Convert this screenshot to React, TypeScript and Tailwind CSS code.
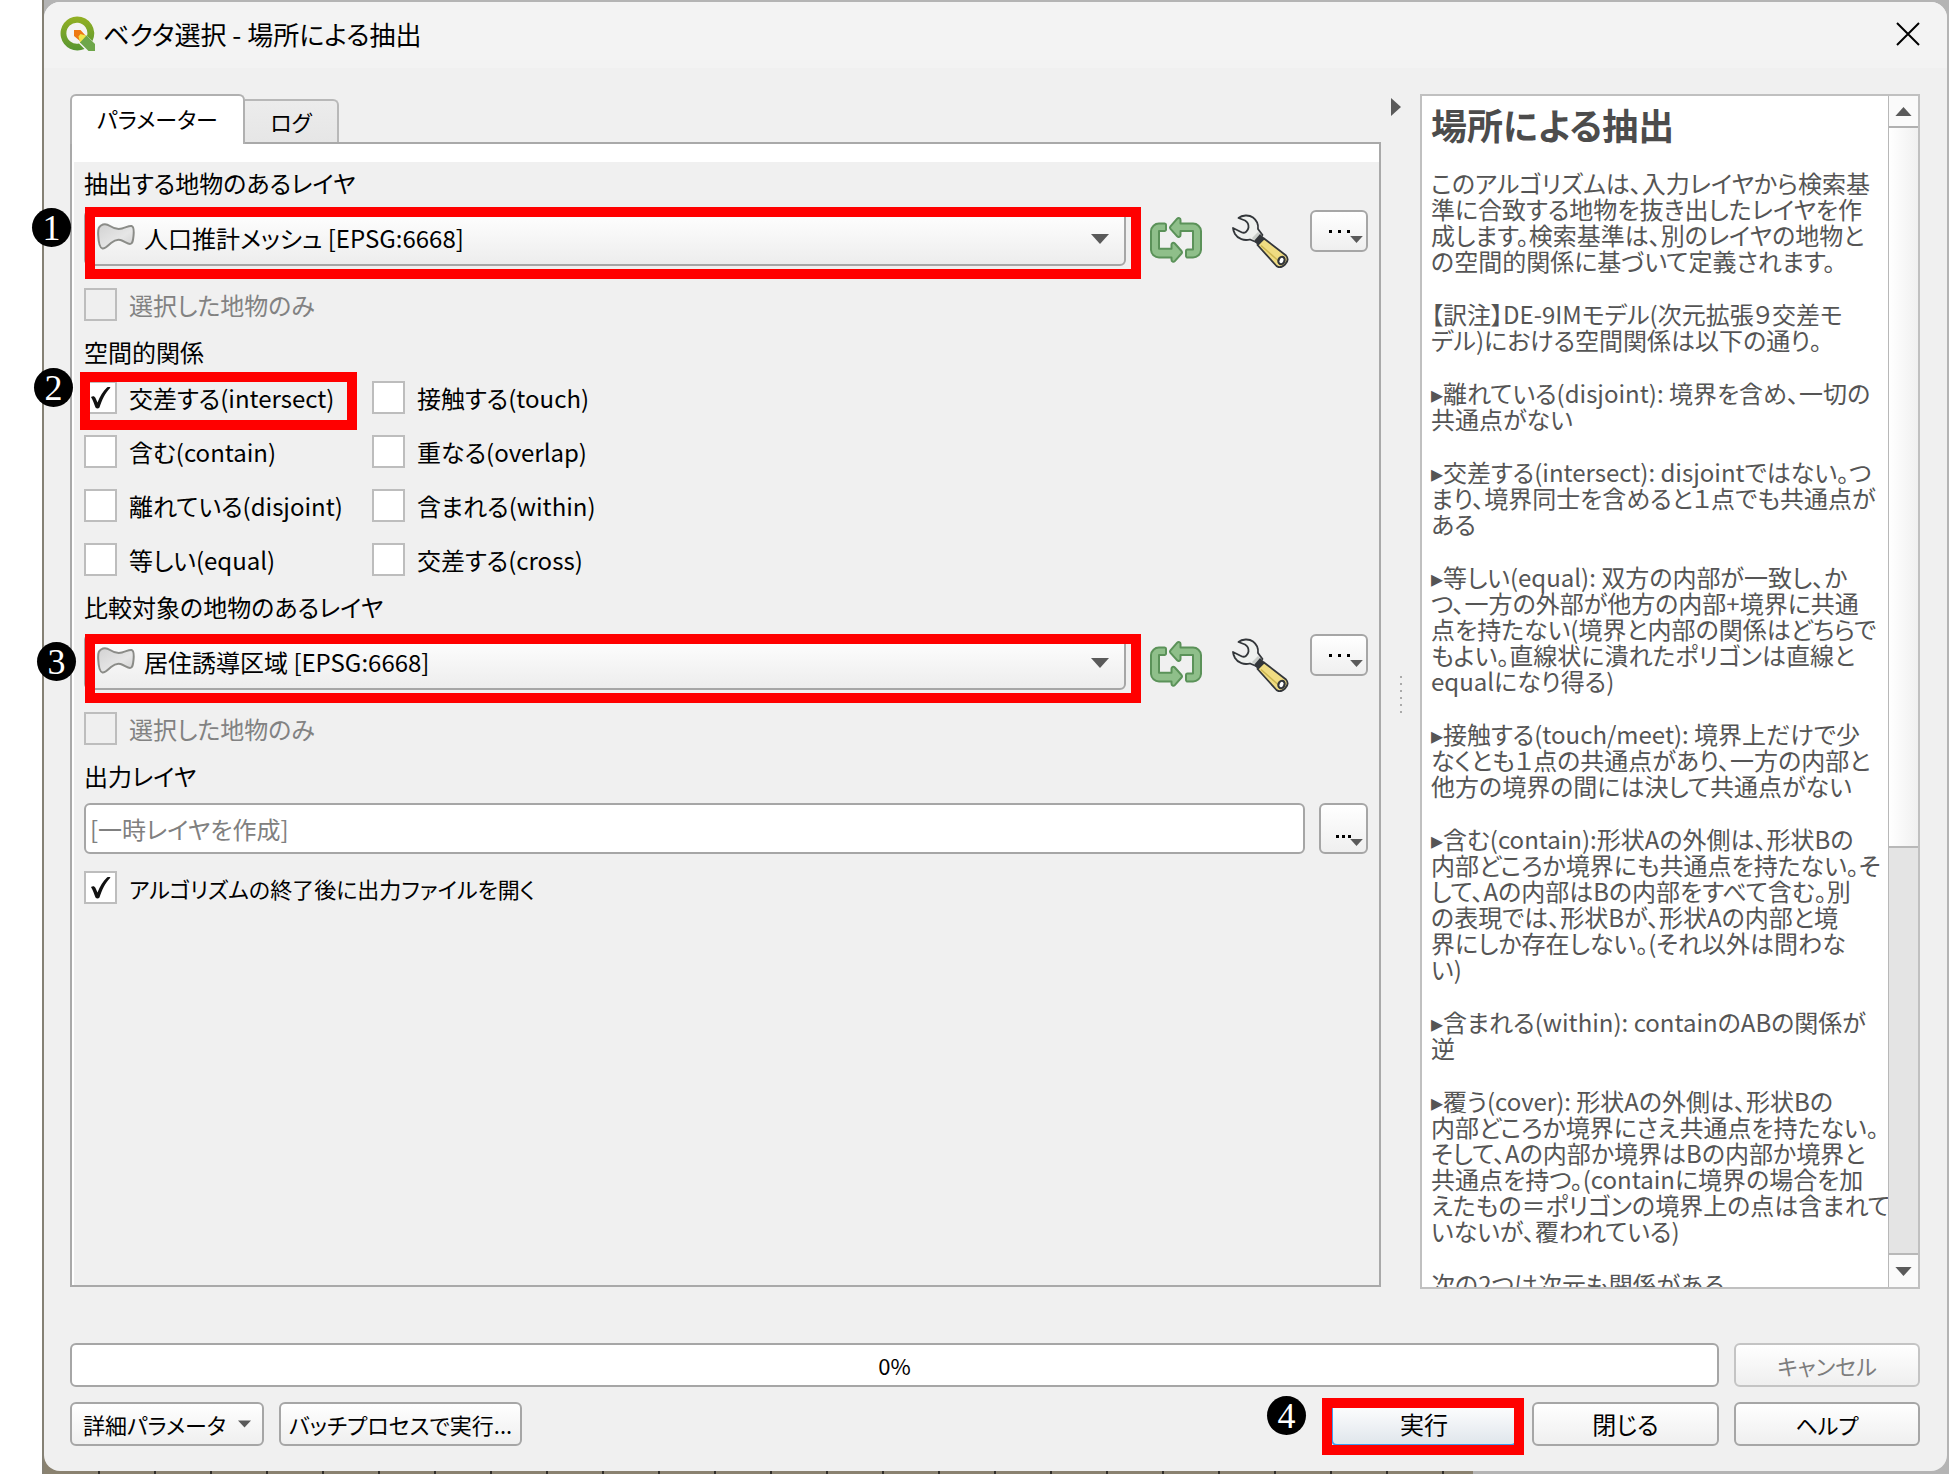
import { useState } from 'react';
import type { ReactNode } from 'react';
import clsx from 'clsx';

const RELATIONS = [
  '交差する(intersect)',
  '接触する(touch)',
  '含む(contain)',
  '重なる(overlap)',
  '離れている(disjoint)',
  '含まれる(within)',
  '等しい(equal)',
  '交差する(cross)',
];

const HELP_PARAGRAPHS = [
  [
    'このアルゴリズムは、入力レイヤから検索基',
    '準に合致する地物を抜き出したレイヤを作',
    '成します。検索基準は、別のレイヤの地物と',
    'の空間的関係に基づいて定義されます。',
  ],
  ['【訳注】DE-9IMモデル(次元拡張９交差モ', 'デル)における空間関係は以下の通り。'],
  ['▸離れている(disjoint): 境界を含め、一切の', '共通点がない'],
  ['▸交差する(intersect): disjointではない。つ', 'まり、境界同士を含めると１点でも共通点が', 'ある'],
  [
    '▸等しい(equal): 双方の内部が一致し、か',
    'つ、一方の外部が他方の内部+境界に共通',
    '点を持たない(境界と内部の関係はどちらで',
    'もよい。直線状に潰れたポリゴンは直線と',
    'equalになり得る)',
  ],
  [
    '▸接触する(touch/meet): 境界上だけで少',
    'なくとも１点の共通点があり、一方の内部と',
    '他方の境界の間には決して共通点がない',
  ],
  [
    '▸含む(contain):形状Aの外側は、形状Bの',
    '内部どころか境界にも共通点を持たない。そ',
    'して、Aの内部はBの内部をすべて含む。別',
    'の表現では、形状Bが、形状Aの内部と境',
    '界にしか存在しない。(それ以外は問わな',
    'い)',
  ],
  ['▸含まれる(within): containのABの関係が', '逆'],
  [
    '▸覆う(cover): 形状Aの外側は、形状Bの',
    '内部どころか境界にさえ共通点を持たない。',
    'そして、Aの内部か境界はBの内部か境界と',
    '共通点を持つ。(containに境界の場合を加',
    'えたもの＝ポリゴンの境界上の点は含まれて',
    'いないが、覆われている)',
  ],
  ['次の2つは次元も関係がある'],
];

const QgisLogo = () => (
  <svg viewBox="0 0 36 36" className="h-9 w-9" aria-hidden="true">
    <defs>
      <linearGradient id="ring" x1="0" y1="0" x2="0" y2="1">
        <stop offset="0" stopColor="#93b023" />
        <stop offset="1" stopColor="#589632" />
      </linearGradient>
    </defs>
    <path
      d="M18 .5a17 17 0 1 0 7.500 32.500l-5.500-5.500A10.500 10.500 0 1 1 28 20l5.500 5A17 17 0 0 0 18 .5z"
      fill="url(#ring)"
    />
    <path d="M21 19.500h6.500L36 28v7h-6.500L21 26.500z" fill="#6ea64a" />
    <path d="M15 14h6.500l5 5.500H21v5.500l-6-5z" fill="#ee7913" />
    <path d="M21.500 18l5 1.500h1L21 26.500l-1.500-6z" fill="#f1e64a" />
  </svg>
);

const PolygonIcon = () => (
  <svg viewBox="0 0 38 27" className="pointer-events-none absolute left-[13px] top-[13px] h-[27px] w-[38px]" aria-hidden="true">
    <defs>
      <linearGradient id="poly" x1="0" y1="0" x2="1" y2="1">
        <stop offset="0" stopColor="#d2d2d2" />
        <stop offset=".6" stopColor="#e6e6e6" />
        <stop offset="1" stopColor="#cfcfcf" />
      </linearGradient>
    </defs>
    <path
      d="M4 2.500C7 .5 10 1 13 3s8 3.500 12 2.500 7-3 9.500-2.500 2.500 5 2 10-1 8-3.500 8-6-3-9.500-4-6.500.5-9.500 3-6 6-8.500 5.500S1.500 19 1.200 12 2 4 4 2.500z"
      fill="url(#poly)"
      stroke="#8b8c88"
      strokeWidth="2"
    />
  </svg>
);

const IterateIcon = () => (
  <svg viewBox="0 0 52 46" className="h-[46px] w-[52px]" aria-hidden="true">
    <g fill="#8fbf8a" stroke="#5b9259" strokeWidth="2" strokeLinejoin="round">
      <path d="M14 6.500H9A8 8 0 0 0 1 14v19a8 8 0 0 0 8 7.500h12.500v2.300c0 1.800 2 2.600 3.300 1.300l6.700-7.600a2 2 0 0 0 0-2.500l-6.700-7.500c-1.300-1.300-3.300-.5-3.300 1.300v4H9V14h5.500a1.500 1.500 0 0 0 1.500-1.500V8a1.500 1.500 0 0 0-2-1.500z" />
      <path d="M38 40.500h5a8 8 0 0 0 8-7.500V14a8 8 0 0 0-8-7.500H30.500V3c0-1.800-2-2.600-3.300-1.300l-6.700 7.600a2 2 0 0 0 0 2.500l6.700 7.500c1.300 1.300 3.300.5 3.300-1.300v-4H43v18.500h-5.500a1.500 1.500 0 0 0-1.500 1.500v5a1.500 1.500 0 0 0 2 1.500z" />
    </g>
  </svg>
);

const WrenchIcon = () => (
  <svg viewBox="0 0 57 54" className="h-[54px] w-[57px]" aria-hidden="true">
    <path
      d="M6.500 4C10 1 17 .5 21 3.500c4 3 5.500 7 5 11.500l4.500 6-6.500 7-6-2.500c-6 1.500-12-.5-15-5.500-1-2-2-4-2-6l9 4.500c3 1 6-1.500 6.500-5 .3-3.500-1-5.500-3.500-7z"
      fill="#eef0ee"
      stroke="#33363a"
      strokeWidth="1.800"
      strokeLinejoin="round"
    />
    <path d="M20 24l6-6 4 3.500-6.500 6.500z" fill="#c9cdc9" />
    <path d="M28 20l5 4.500-6.500 7.500-4.500-5z" fill="#33363a" />
    <path
      d="M32 24.500l22 17c3 3.500 2 6-1 9s-6 3.500-8.500 1.500L25.500 31z"
      fill="#f0dc82"
      stroke="#33363a"
      strokeWidth="1.800"
      strokeLinejoin="round"
    />
    <path d="M29 31.500l17 15" stroke="#cdb650" strokeWidth="1.500" />
    <ellipse cx="49.500" cy="46.500" rx="3" ry="3.800" fill="#fff" stroke="#33363a" strokeWidth="2.200" transform="rotate(25 49.500 46.500)" />
  </svg>
);

const Triangle = ({ className }: { className?: string }) => (
  <svg viewBox="0 0 18 10" className={clsx('pointer-events-none', className)} aria-hidden="true">
    <path d="M0 0h18L9 10z" fill="#5a5a5a" />
  </svg>
);

const Highlight = ({ className }: { className: string }) => (
  <div className={clsx('pointer-events-none absolute z-10 border-10 border-[#ff0000]', className)} />
);

const StepBadge = ({ n, className }: { n: number; className: string }) => (
  <div
    className={clsx(
      'absolute z-20 flex h-[39px] w-[39px] items-center justify-center rounded-full bg-black font-["Liberation_Serif",serif] text-[36px] leading-none text-white',
      className,
    )}
  >
    {n}
  </div>
);

interface CheckProps {
  label: string;
  checked?: boolean;
  disabled?: boolean;
}

const Check = ({ label, checked = false, disabled = false }: CheckProps) => {
  const [on, setOn] = useState(checked);
  return (
    <label className={clsx('flex h-[33px] items-center gap-3', disabled && 'text-[#828282]')}>
      <span className="relative h-[33px] w-[33px] shrink-0">
        <input
          type="checkbox"
          checked={on}
          disabled={disabled}
          onChange={() => setOn(!on)}
          className="block h-[33px] w-[33px] appearance-none border-2 border-[#bdbdbd] bg-white disabled:bg-[#efefef]"
        />
        {on && (
          <svg viewBox="0 0 33 33" className="pointer-events-none absolute inset-0" aria-hidden="true">
            <path d="M7 16c2-1.500 3.500-1 4.500 1l2 4.500C16 15 19 10 23 6.500c1-.6 2.500-.5 3.500 0C21 12 18 19 15.500 26.500c-1 1.200-3 1.200-4 0C10 23 9 19 7 16z" fill="#111" />
          </svg>
        )}
      </span>
      <span className="whitespace-nowrap">{label}</span>
    </label>
  );
};

const buttonBase =
  'flex items-center justify-center whitespace-nowrap rounded-md border-2 border-[#a6a6a6] bg-linear-to-b from-white to-[#efefef]';

const Dots = ({ className }: { className: string }) => (
  <span className={clsx('flex', className)}>
    <i className="h-[3px] w-[3px] bg-black" />
    <i className="h-[3px] w-[3px] bg-black" />
    <i className="h-[3px] w-[3px] bg-black" />
  </span>
);

interface LayerFieldProps {
  id: string;
  label: string;
  value: string;
  children?: ReactNode;
}

const LayerField = ({ id, label, value, children }: LayerFieldProps) => (
  <div>
    <label htmlFor={id} className="block h-8">
      {label}
    </label>
    <div className="relative mt-[11px] flex h-14 items-start">
      <div className="relative h-full flex-1">
        <select
          id={id}
          className="h-full w-full appearance-none rounded-md border-2 border-[#a6a6a6] bg-linear-to-b from-white to-[#ededed] pl-[58px]"
        >
          <option>{value}</option>
        </select>
        <PolygonIcon />
        <Triangle className="absolute right-[17px] top-6 h-[10px] w-[18px]" />
        {children}
      </div>
      <button type="button" aria-label="地物ごとに反復" className="ml-6 mt-[7px]">
        <IterateIcon />
      </button>
      <button type="button" aria-label="詳細オプション" className="ml-[30px] mt-1">
        <WrenchIcon />
      </button>
      <button type="button" aria-label="参照" className={clsx(buttonBase, 'relative ml-[21px] h-[42px] w-[58px]')}>
        <Dots className="gap-[6px]" />
        <Triangle className="absolute bottom-[7px] right-[3px] h-[7px] w-[13px]" />
      </button>
    </div>
    <div className="mt-[22px]">
      <Check label="選択した地物のみ" disabled />
    </div>
  </div>
);

const HelpPanel = () => (
  <aside className="-mb-[2px] flex w-[500px] shrink-0 border-2 border-[#c0c0c0] bg-white text-[#555]">
    <div className="min-w-0 flex-1 overflow-hidden pl-[9px]">
      <h2 className="mb-[26px] mt-2 h-10 text-[36px] font-bold leading-10 text-[#4c4c4c]">場所による抽出</h2>
      {HELP_PARAGRAPHS.map((lines) => (
        <p key={lines[0]} className="mb-[27px] leading-[26px]">
          {lines.map((line) => (
            <span key={line} className="block whitespace-nowrap">
              {line}
            </span>
          ))}
        </p>
      ))}
    </div>
    <div className="flex w-[30px] shrink-0 flex-col border-l border-[#b8b8b8]">
      <button type="button" aria-label="上へ" className="flex h-8 items-center justify-center border-b-2 border-[#b0b0b0] bg-[#fafafa]">
        <Triangle className="h-[9px] w-[17px] rotate-180" />
      </button>
      <div className="flex flex-1 flex-col bg-[#e4e4e4]">
        <div className="h-[64%] border-b-2 border-[#b8b8b8] bg-linear-to-r from-white to-[#f0f0f0]" />
      </div>
      <button type="button" aria-label="下へ" className="flex h-[34px] items-center justify-center border-t-2 border-[#b8b8b8] bg-[#fafafa]">
        <Triangle className="h-[9px] w-[17px]" />
      </button>
    </div>
  </aside>
);

export default function App() {
  const [output, setOutput] = useState('');

  return (
    <div className='relative flex h-screen bg-white pl-[42px] font-["Noto_Sans_CJK_JP",sans-serif] text-[24px] leading-8 text-black [font-feature-settings:"palt"]'>
      <StepBadge n={1} className="left-8 top-[208px]" />
      <StepBadge n={2} className="left-[34px] top-[368px]" />
      <StepBadge n={3} className="left-[37px] top-[642px]" />

      <div className="relative flex min-w-0 flex-1 border-l-2 border-[#858175] bg-[#b4b4b4] pb-[3px] pr-[2px] pt-[2px]">
        <div className="absolute bottom-0 left-0 h-5 w-3/4 bg-[repeating-linear-gradient(90deg,#8a8270_0_54px,#33302b_54px_56px)]" />
        <div className="relative flex min-w-0 flex-1 flex-col overflow-hidden rounded-2xl bg-[#f0f0f0]">
          <header className="flex h-[66px] shrink-0 items-center bg-[#f3f3f3] pb-[2px] pl-[15px] pr-[27px] text-[26px]">
            <QgisLogo />
            <h1 className="ml-2 flex-1">ベクタ選択 - 場所による抽出</h1>
            <button type="button" aria-label="閉じる">
              <svg viewBox="0 0 24 24" className="h-6 w-6" aria-hidden="true">
                <path d="M1 1l22 22M23 1L1 23" stroke="#000" strokeWidth="2" />
              </svg>
            </button>
          </header>

          <main className="flex min-h-0 flex-1 pl-[26px] pr-[27px] pt-[26px]">
            <div className="flex min-w-0 flex-1 flex-col">
              <div role="tablist" className="flex h-12 items-end">
                <button
                  type="button"
                  role="tab"
                  aria-selected="true"
                  className="relative -mb-[2px] h-[50px] w-[175px] rounded-t-md border-2 border-b-0 border-[#b0b0b0] bg-white pb-1 text-[22px]"
                >
                  パラメーター
                </button>
                <button
                  type="button"
                  role="tab"
                  aria-selected="false"
                  className="h-[43px] w-[94px] rounded-tr-md border-2 border-b-0 border-l-0 border-[#b8b8b8] bg-linear-to-b from-[#ececec] to-[#e6e6e6] pb-[2px] text-[22px]"
                >
                  ログ
                </button>
              </div>

              <section className="flex-1 border-2 border-[#a9a9a9] bg-white pl-[2px] pt-[18px]">
                <div className="h-full bg-[#f0f0f0] pl-[10px] pr-[11px] pt-[5px]">
                  <LayerField id="input-layer" label="抽出する地物のあるレイヤ" value="人口推計メッシュ [EPSG:6668]">
                    <Highlight className="-right-[15px] -top-[3px] left-[1px] h-[72px]" />
                  </LayerField>

                  <fieldset className="relative mt-[15px]">
                    <legend className="h-8">空間的関係</legend>
                    <div className="mt-[13px] grid grid-cols-[288px_max-content] gap-y-[21px]">
                      {RELATIONS.map((name, i) => (
                        <Check key={name} label={name} checked={i === 0} />
                      ))}
                    </div>
                    <Highlight className="-left-1 top-1 h-[58px] w-[277px]" />
                  </fieldset>

                  <div className="mt-[15px]">
                    <LayerField id="compare-layer" label="比較対象の地物のあるレイヤ" value="居住誘導区域 [EPSG:6668]">
                      <Highlight className="-right-[15px] left-[1px] top-0 h-[69px]" />
                    </LayerField>
                  </div>

                  <label htmlFor="output-layer" className="mt-[15px] block h-8">
                    出力レイヤ
                  </label>
                  <div className="mt-[11px] flex h-[51px] gap-[14px]">
                    <input
                      id="output-layer"
                      type="text"
                      value={output}
                      onChange={(e) => setOutput(e.target.value)}
                      placeholder="[一時レイヤを作成]"
                      className="min-w-0 flex-1 rounded-md border-2 border-[#a6a6a6] bg-white px-1 placeholder:text-[#808080]"
                    />
                    <button type="button" aria-label="出力先" className={clsx(buttonBase, 'relative w-[49px] pt-4')}>
                      <Dots className="gap-[3px]" />
                      <Triangle className="absolute bottom-[6px] right-[3px] h-[7px] w-[13px]" />
                    </button>
                  </div>
                  <div className="mt-[17px] text-[22px]">
                    <Check label="アルゴリズムの終了後に出力ファイルを開く" checked />
                  </div>
                </div>
              </section>
            </div>

            <div className="relative flex w-[39px] shrink-0 items-center justify-center">
              <svg viewBox="0 0 10 18" className="absolute left-[10px] top-1 h-[18px] w-[10px]" aria-hidden="true">
                <path d="M0 0l10 9-10 9z" fill="#5a5a5a" />
              </svg>
              <div className="flex flex-col gap-[5px] pt-2">
                {[0, 1, 2, 3, 4, 5].map((dot) => (
                  <i key={dot} className="h-[2px] w-[2px] bg-[#aaa]" />
                ))}
              </div>
            </div>

            <HelpPanel />
          </main>

          <footer className="mt-14 grid shrink-0 grid-cols-[1fr_186px] gap-x-[15px] gap-y-[15px] pb-[25px] pl-[26px] pr-[27px]">
            <div
              role="progressbar"
              aria-valuenow={0}
              className="flex h-11 items-center justify-center rounded-md border-2 border-[#a6a6a6] bg-white text-[22px]"
            >
              0%
            </div>
            <button type="button" disabled className={clsx(buttonBase, 'h-11 border-[#c4c4c4] text-[22px] text-[#7d7d7d]')}>
              キャンセル
            </button>
            <div className="flex gap-[15px]">
              <button type="button" className={clsx(buttonBase, 'h-11 w-[194px] gap-3 text-[22px]')}>
                詳細パラメータ
                <Triangle className="h-2 w-[13px]" />
              </button>
              <button type="button" className={clsx(buttonBase, 'h-11 w-[243px] text-[22px]')}>
                バッチプロセスで実行...
              </button>
              <div className="relative ml-auto w-[186px]">
                <StepBadge n={4} className="-left-[64px] -top-[6px]" />
                <button type="button" className="h-11 w-full rounded-md border-2 border-[#3c9df0] bg-linear-to-b from-white to-[#e0e6ec]">
                  実行
                </button>
                <Highlight className="-left-[9px] -right-[7px] -top-1 h-[57px]" />
              </div>
              <button type="button" className={clsx(buttonBase, 'h-11 w-[187px]')}>
                閉じる
              </button>
            </div>
            <button type="button" className={clsx(buttonBase, 'h-11 text-[22px]')}>
              ヘルプ
            </button>
          </footer>
        </div>
      </div>
    </div>
  );
}
